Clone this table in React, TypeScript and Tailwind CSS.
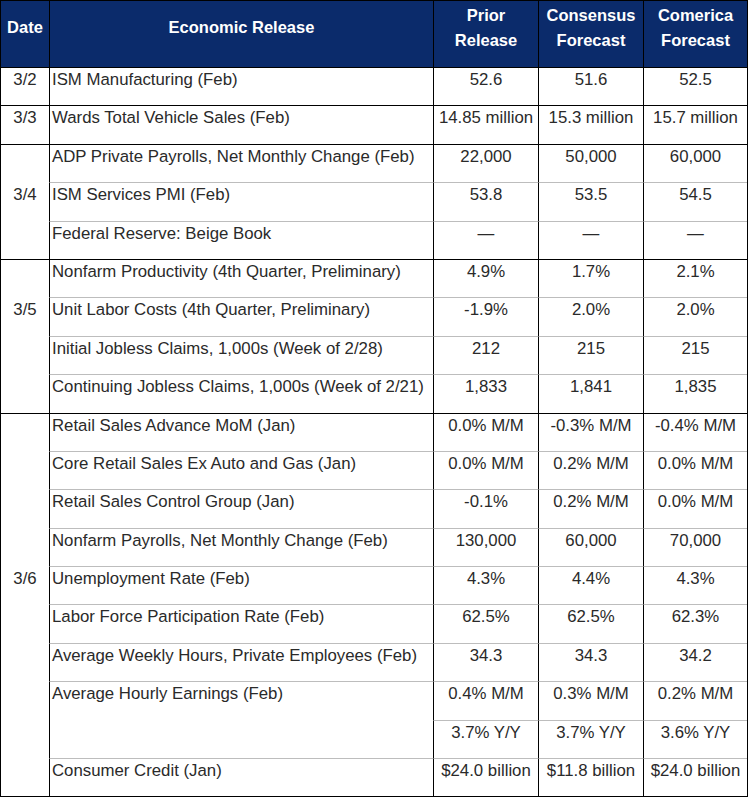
import React from "react";

type Row = { name: string; v: [string, string, string]; noTopRelease?: boolean };
type Group = { date: string; k: number; rows: Row[] };

const groups: Group[] = [
  { date: "3/2", k: 0, rows: [{ name: "ISM Manufacturing (Feb)", v: ["52.6", "51.6", "52.5"] }] },
  { date: "3/3", k: 0, rows: [{ name: "Wards Total Vehicle Sales (Feb)", v: ["14.85 million", "15.3 million", "15.7 million"] }] },
  {
    date: "3/4",
    k: 1,
    rows: [
      { name: "ADP Private Payrolls, Net Monthly Change (Feb)", v: ["22,000", "50,000", "60,000"] },
      { name: "ISM Services PMI (Feb)", v: ["53.8", "53.5", "54.5"] },
      { name: "Federal Reserve: Beige Book", v: ["—", "—", "—"] },
    ],
  },
  {
    date: "3/5",
    k: 1,
    rows: [
      { name: "Nonfarm Productivity (4th Quarter, Preliminary)", v: ["4.9%", "1.7%", "2.1%"] },
      { name: "Unit Labor Costs (4th Quarter, Preliminary)", v: ["-1.9%", "2.0%", "2.0%"] },
      { name: "Initial Jobless Claims, 1,000s (Week of 2/28)", v: ["212", "215", "215"] },
      { name: "Continuing Jobless Claims, 1,000s (Week of 2/21)", v: ["1,833", "1,841", "1,835"] },
    ],
  },
  {
    date: "3/6",
    k: 4,
    rows: [
      { name: "Retail Sales Advance MoM (Jan)", v: ["0.0% M/M", "-0.3% M/M", "-0.4% M/M"] },
      { name: "Core Retail Sales Ex Auto and Gas (Jan)", v: ["0.0% M/M", "0.2% M/M", "0.0% M/M"] },
      { name: "Retail Sales Control Group (Jan)", v: ["-0.1%", "0.2% M/M", "0.0% M/M"] },
      { name: "Nonfarm Payrolls, Net Monthly Change (Feb)", v: ["130,000", "60,000", "70,000"] },
      { name: "Unemployment Rate (Feb)", v: ["4.3%", "4.4%", "4.3%"] },
      { name: "Labor Force Participation Rate (Feb)", v: ["62.5%", "62.5%", "62.3%"] },
      { name: "Average Weekly Hours, Private Employees (Feb)", v: ["34.3", "34.3", "34.2"] },
      { name: "Average Hourly Earnings (Feb)", v: ["0.4% M/M", "0.3% M/M", "0.2% M/M"] },
      { name: "", v: ["3.7% Y/Y", "3.7% Y/Y", "3.6% Y/Y"], noTopRelease: true },
      { name: "Consumer Credit (Jan)", v: ["$24.0 billion", "$11.8 billion", "$24.0 billion"] },
    ],
  },
];

const numW = ["w-[105px]", "w-[105px]", "w-[104px]"];

export default function App() {
  return (
    <div className="bg-white w-[749px] h-[797px] font-['Liberation_Sans',Arial,sans-serif]">
      <div className="w-[748px] border-r border-b border-black">
        {/* Header */}
        <div className="flex h-[67px] bg-[#0b2b6b] text-white font-bold text-[16.5px] leading-[25px] border-t border-black">
          <div className="w-[49px] border-l border-black flex items-center justify-center pb-[13px]">Date</div>
          <div className="w-[384px] border-l border-black flex items-center justify-center pb-[13px]">Economic Release</div>
          <div className="w-[105px] border-l border-black flex items-center justify-center text-center pb-[13px]">
            Prior
            <br />
            Release
          </div>
          <div className="w-[105px] border-l border-black flex items-center justify-center text-center pb-[13px]">
            Consensus
            <br />
            Forecast
          </div>
          <div className="w-[104px] border-l border-black flex items-center justify-center text-center pb-[13px]">
            Comerica
            <br />
            Forecast
          </div>
        </div>
        {/* Body */}
        <div className="text-[16.8px] leading-[20px] text-[#2a2a2a]">
          {groups.map((g) => (
            <div key={g.date} className="flex border-t border-black">
              <div className="w-[49px] border-l border-black flex flex-col">
                {g.rows.map((_, i) => (
                  <div
                    key={i}
                    className={`${i === 0 ? "h-[37.4px]" : "h-[38.4px]"} ${i === 0 ? "pt-[2px]" : "pt-[3px]"} text-center`}
                  >
                    {i === g.k ? g.date : ""}
                  </div>
                ))}
              </div>
              <div className="flex flex-col">
                {g.rows.map((r, i) => (
                  <div key={i} className={`flex ${i === 0 ? "h-[37.4px]" : "h-[38.4px]"}`}>
                    <div
                      className={`w-[384px] border-l border-black pl-[2px] whitespace-nowrap ${
                        i === 0 ? "pt-[2px]" : r.noTopRelease ? "pt-[3px]" : "border-t border-t-[#bdbdbd] pt-[2px]"
                      }`}
                    >
                      {r.name}
                    </div>
                    {r.v.map((v, j) => (
                      <div
                        key={j}
                        className={`${numW[j]} border-l border-black text-center whitespace-nowrap ${
                          i === 0 ? "pt-[2px]" : "border-t border-t-[#bdbdbd] pt-[2px]"
                        }`}
                      >
                        {v}
                      </div>
                    ))}
                  </div>
                ))}
              </div>
            </div>
          ))}
        </div>
      </div>
    </div>
  );
}
